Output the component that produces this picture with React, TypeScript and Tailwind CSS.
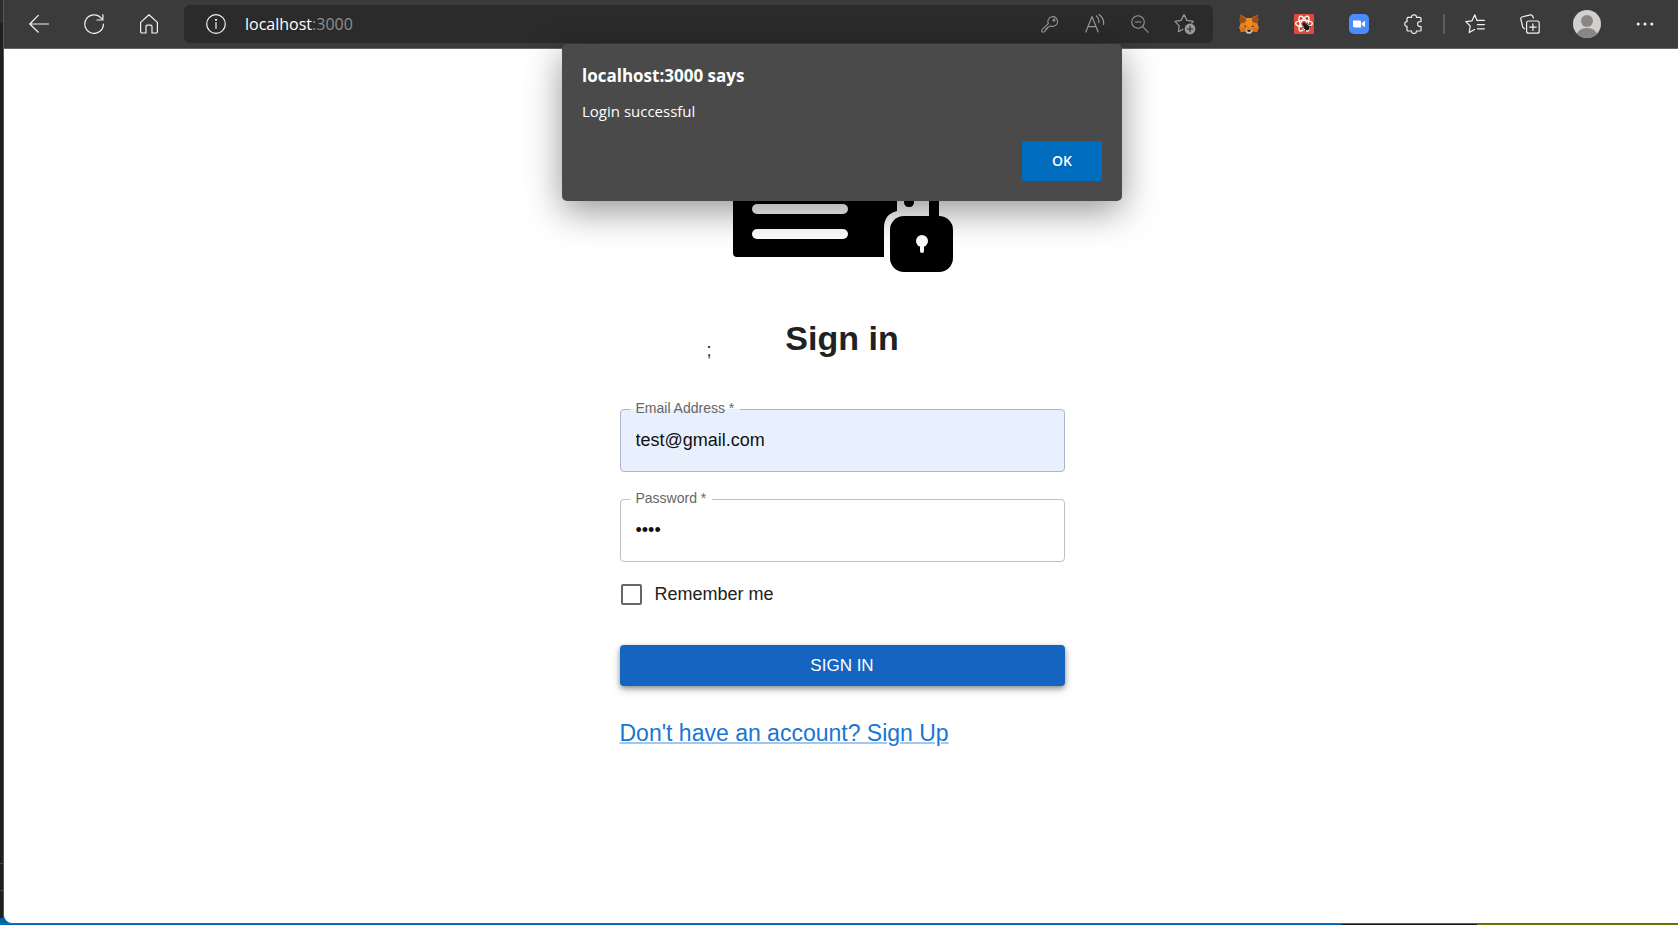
import { useState } from 'react';
import type { ReactNode } from 'react';

function IconButton({ label, width = 'w-[55px]', children }: { label: string; width?: string; children: ReactNode }) {
  return (
    <button type="button" aria-label={label} className={`${width} h-9 shrink-0 flex items-center justify-center`}>
      {children}
    </button>
  );
}

function Line({ size = 20, children }: { size?: number; children: ReactNode }) {
  return (
    <svg width={size} height={size} viewBox="0 0 20 20" fill="none" stroke="currentColor" strokeWidth="1.2" strokeLinecap="round" strokeLinejoin="round">
      {children}
    </svg>
  );
}

function MetaMaskIcon() {
  return (
    <svg width="20" height="20" viewBox="0 0 20 20">
      <path d="M1.4 0.6 L7.4 4 H12.6 L18.6 0.6 L19.4 6 L18.4 9.4 L19.8 13.6 L18 18 L13.6 17.2 L11.8 19.4 H8.2 L6.4 17.2 L2 18 L0.2 13.6 L1.6 9.4 L0.6 6 Z" fill="#e8821e" />
      <path d="M1.4 0.6 L7.4 5 L6.4 8.2 L1.6 9.4 L0.6 6 Z M18.6 0.6 L12.6 5 L13.6 8.2 L18.4 9.4 L19.4 6 Z" fill="#96501f" />
      <path d="M7.4 4.4 H12.6 L13.4 8.4 L12 13 H8 L6.6 8.4 Z" fill="#f6891f" />
      <path d="M5.2 11.2 L8 12.4 L5.8 13 Z M14.8 11.2 L12 12.4 L14.2 13 Z" fill="#2b3338" />
      <path d="M6.4 17.2 L8.2 15.4 H11.8 L13.6 17.2 L11.8 19.4 H8.2 Z" fill="#d4c6bb" />
      <path d="M8.2 15.8 H11.8 L11.3 17.8 H8.7 Z" fill="#161616" />
      <path d="M0.2 13.6 L5.8 13.2 L6.4 17.2 L2 18 Z M19.8 13.6 L14.2 13.2 L13.6 17.2 L18 18 Z" fill="#d9721a" />
    </svg>
  );
}

function ReactDevIcon() {
  return (
    <svg width="20" height="20" viewBox="0 0 20 20">
      <rect width="20" height="20" rx="1" fill="#dd4b39" />
      <g fill="none" stroke="#fff" strokeWidth="1.3">
        <ellipse cx="10" cy="9.6" rx="8.4" ry="3.3" />
        <ellipse cx="10" cy="9.6" rx="8.4" ry="3.3" transform="rotate(60 10 9.6)" />
        <ellipse cx="10" cy="9.6" rx="8.4" ry="3.3" transform="rotate(120 10 9.6)" />
      </g>
      <g transform="rotate(-40 12 12.5)">
        <ellipse cx="12" cy="13.4" rx="2.3" ry="3.4" fill="#1b1b1b" />
        <circle cx="12" cy="9.4" r="1.6" fill="#1b1b1b" />
        <path d="M8.4 10.4 L15.6 15.6 M15.6 10.4 L8.4 15.6 M8 13 H16" stroke="#1b1b1b" strokeWidth="0.9" />
      </g>
    </svg>
  );
}

function ZoomIcon() {
  return (
    <svg width="20" height="20" viewBox="0 0 20 20">
      <rect width="20" height="20" rx="5" fill="#4a8cff" />
      <path d="M4 6.6 H10.6 Q12.2 6.6 12.2 8.2 V13.4 H5.6 Q4 13.4 4 11.8 Z M13 9 L16 6.8 V13.2 L13 11 Z" fill="#fff" />
    </svg>
  );
}

function Toolbar() {
  return (
    <header className="flex h-[49px] items-center border-b border-[#6a6666] bg-[#3b3b3b] pl-[7px] pr-[6px] pb-1 pt-[3px] text-[#f2f2f2]">
      <IconButton label="Back">
        <Line><path d="M19.5 10 H0.8 M9.3 1.3 L0.8 10 L9.3 18.2" /></Line>
      </IconButton>
      <IconButton label="Refresh">
        <Line><path d="M17.6 4.6 A9.3 9.3 0 1 0 19.4 10 M18.9 0.6 V6 H13" /></Line>
      </IconButton>
      <IconButton label="Home">
        <Line><path d="M1.6 8.4 L10 0.8 L18.4 8.4 V17.4 Q18.4 19 16.8 19 H13 V12.4 Q13 11.2 11.8 11.2 H8.2 Q7 11.2 7 12.4 V19 H3.2 Q1.6 19 1.6 17.4 Z" /></Line>
      </IconButton>

      <div className="mx-2 flex h-[38px] min-w-0 flex-1 items-center rounded-md bg-[#2b2b2b] pl-1 pr-[6px]">
        <IconButton label="View site information">
          <Line>
            <circle cx="10" cy="10" r="9.3" />
            <path d="M10 8.6 V14.4" />
            <circle cx="10" cy="5.8" r="0.5" fill="currentColor" />
          </Line>
        </IconButton>
        <p className="min-w-0 flex-1 truncate pl-[2px] font-['Open_Sans',sans-serif] text-[16px] leading-6 text-[#8f8f8f]">
          <span className="text-white">localhost</span>:3000
        </p>
        <div className="flex text-[#9a9a9a]">
          <IconButton label="Saved passwords" width="w-[45px]">
            <Line size={18}>
              <path d="M8.2 9.6 A5.4 5.4 0 1 1 11.6 12.4 L10.2 12 L8.6 13.6 H7 V15.4 H5.2 V17.2 L3.6 18.8 H1 V16.2 Z" />
              <circle cx="14.4" cy="5.8" r="1" />
            </Line>
          </IconButton>
          <IconButton label="Read aloud" width="w-[45px]">
            <Line>
              <path d="M0.8 18 L7 2.6 L13.2 18 M3 12.6 H11 M11.4 2 Q14.4 4.6 13.8 8.6 M14 0.6 Q19.2 4.6 18.6 10.4" />
            </Line>
          </IconButton>
          <IconButton label="Zoom" width="w-[45px]">
            <Line size={18}><circle cx="7.8" cy="7.8" r="7" /><path d="M13 13 L19.2 19.2 M4.6 7.8 H11" /></Line>
          </IconButton>
          <IconButton label="Add to favorites" width="w-[45px]">
            <svg width="22" height="22" viewBox="0 0 22 22" fill="none" stroke="currentColor" strokeWidth="1.2" strokeLinejoin="round">
              <path d="M9.4 16 L4.4 18.8 L5.2 12.8 L1 8.4 L7 7.4 L10 1.6 L13 7.4 L19.4 8.4 L17.4 10.4" />
              <circle cx="16" cy="16" r="5.4" fill="currentColor" stroke="none" />
              <path d="M16 12.8 V19.2 M12.8 16 H19.2" stroke="#2b2b2b" />
            </svg>
          </IconButton>
        </div>
      </div>

      <IconButton label="MetaMask"><MetaMaskIcon /></IconButton>
      <IconButton label="React Developer Tools"><ReactDevIcon /></IconButton>
      <IconButton label="Zoom meetings"><ZoomIcon /></IconButton>
      <IconButton label="Extensions">
        <Line>
          <path d="M4 3.4 H7.6 Q7.4 0.8 10 0.8 Q12.6 0.8 12.4 3.4 H16 Q17 3.4 17 4.4 V7.6 Q13.6 7 13.6 10 Q13.6 13 17 12.4 V16 Q17 17 16 17 H12.4 Q12.6 19.4 10 19.4 Q7.4 19.4 7.6 17 H4 Q3 17 3 16 V12.4 Q0.8 12.6 0.8 10 Q0.8 7.4 3 7.6 V4.4 Q3 3.4 4 3.4 Z" />
        </Line>
      </IconButton>
      <div className="mx-[2px] h-5 w-[2px] shrink-0 bg-[#5c5c5c]" />
      <IconButton label="Favorites">
        <Line>
          <path d="M12 6.6 L9.8 0.8 L7 6.8 L0.8 7.6 L5.2 12 L4.2 18.6 L9.6 15.6 M12.4 6.4 H19.4 M12.4 10.6 H19.4 M12.4 14.8 H19.4" />
        </Line>
      </IconButton>
      <IconButton label="Collections">
        <Line>
          <rect x="6.6" y="7" width="12.6" height="12.2" rx="2" />
          <path d="M12.9 9.8 V16.4 M9.6 13.1 H16.2 M4.6 14.8 L2.8 13.4 L0.8 5 Q0.5 3.4 2 3 L10.6 0.8 Q12 0.6 12.6 2 L13.4 4" />
        </Line>
      </IconButton>
      <IconButton label="Profile" width="w-[60px]">
        <svg width="28" height="28" viewBox="0 0 28 28">
          <clipPath id="avatar"><circle cx="14" cy="14" r="14" /></clipPath>
          <g clipPath="url(#avatar)">
            <rect width="28" height="28" fill="#d2d0ce" />
            <circle cx="14" cy="11" r="6" fill="#8a8683" />
            <ellipse cx="14" cy="26" rx="10.5" ry="8" fill="#8a8683" />
          </g>
        </svg>
      </IconButton>
      <IconButton label="Settings and more">
        <svg width="18" height="4" viewBox="0 0 18 4" fill="currentColor">
          <circle cx="2.2" cy="2" r="1.5" /><circle cx="9" cy="2" r="1.5" /><circle cx="15.8" cy="2" r="1.5" />
        </svg>
      </IconButton>
    </header>
  );
}

function AlertDialog({ onClose }: { onClose: () => void }) {
  return (
    <div className="absolute inset-x-0 top-[44px] z-10 flex justify-center pl-[2px]">
      <div
        role="alertdialog"
        aria-labelledby="alert-title"
        aria-describedby="alert-text"
        className="w-[560px] rounded-[5px] bg-[#4a4a4a] px-5 py-5 font-['Open_Sans',sans-serif] text-white shadow-[0_10px_36px_rgba(0,0,0,0.42)]"
      >
        <h2 id="alert-title" className="text-[17px] font-bold leading-6">localhost:3000 says</h2>
        <p id="alert-text" className="mt-[11px] text-[15px] leading-6">Login successful</p>
        <div className="mt-[18px] flex justify-end">
          <button type="button" onClick={onClose} className="h-10 w-20 rounded-[2px] bg-[#006cbe] pb-[2px] text-[14px] font-semibold">
            OK
          </button>
        </div>
      </div>
    </div>
  );
}

function CardLockLogo() {
  return (
    <svg width="222" height="172" viewBox="-2 0 222 172" className="mx-auto">
      <path d="M4 16 H196 V90 H164 V111 Q151 114 151 128 V157 H4 Q0 157 0 153 V20 Q0 16 4 16 Z" />
      <rect x="164" y="50" width="42" height="61" fill="#fff" />
      <path d="M171 80 Q171 60 188.500 60 Q206 60 206 80 V120 H196 V80 Q196 70 188.500 70 Q181 70 181 80 V102 Q181 107 176 107 Q171 107 171 102 Z" />
      <rect x="19" y="104" width="96" height="10" rx="5" fill="#fff" />
      <rect x="19" y="129" width="96" height="10" rx="5" fill="#fff" />
      <rect x="157" y="116" width="63" height="56" rx="14" />
      <circle cx="189" cy="141" r="6" fill="#fff" />
      <rect x="187" y="143" width="4" height="10" rx="2" fill="#fff" />
    </svg>
  );
}

type FieldProps = { id: string; label: string; type: string; value: string; filled?: boolean; onChange: (value: string) => void };

function OutlinedField({ id, label, type, value, filled, onChange }: FieldProps) {
  return (
    <fieldset className={`min-w-0 rounded-[4px] border pl-[9px] pr-[15px] pb-2 ${filled ? 'border-[#adb6c8] bg-[#e8f0fe]' : 'border-[#c0c0c0] bg-white'}`}>
      <legend className="px-[6px] pb-[2px] text-[14px] leading-4 text-[#666666]">
        <label htmlFor={id}>{label} *</label>
      </legend>
      <input
        id={id}
        type={type}
        value={value}
        onChange={e => onChange(e.target.value)}
        className="block h-[45px] w-full bg-transparent px-[6px] text-[18px] text-[#111111] outline-none"
      />
    </fieldset>
  );
}

function SignInForm() {
  const [email, setEmail] = useState('test@gmail.com');
  const [password, setPassword] = useState('1234');
  const [remember, setRemember] = useState(false);

  return (
    <form onSubmit={e => e.preventDefault()} className="mt-[42px] flex flex-col">
      <div className="flex flex-col gap-[18px]">
        <OutlinedField id="email" label="Email Address" type="email" value={email} filled onChange={setEmail} />
        <OutlinedField id="password" label="Password" type="password" value={password} onChange={setPassword} />
      </div>
      <label className="mt-5 flex h-6 items-center gap-[13px] pl-[1px] text-[18px] text-[#212121]">
        <input
          type="checkbox"
          checked={remember}
          onChange={e => setRemember(e.target.checked)}
          className="size-[21px] appearance-none rounded-[2px] border-2 border-[#666666] checked:bg-[#1976d2]"
        />
        Remember me
      </label>
      <button
        type="submit"
        className="mt-[39px] h-[41px] rounded-[4px] bg-[#1565c0] text-[17px] text-white shadow-[0_2px_5px_rgba(0,0,0,0.35),0_4px_10px_rgba(0,0,0,0.18)]"
      >
        SIGN IN
      </button>
      <a href="#signup" className="mt-[29px] self-start text-[23px] leading-9 text-[#1976d2] underline decoration-[#1976d2]/40 decoration-2">
        Don't have an account? Sign Up
      </a>
    </form>
  );
}

export default function App() {
  const [alertOpen, setAlertOpen] = useState(true);

  return (
    <div className="relative flex min-h-screen flex-col bg-[#0063a8] font-['Liberation_Sans',Arial,sans-serif]">
      <div className="flex flex-1">
        <div className="mb-[5px] flex w-1 shrink-0 flex-col border-r border-[#555555] bg-[#1f1f1f]">
          <div className="h-[23px] bg-[#2d2d2d]" />
          <div className="mb-[27px] mt-auto h-[28px] border-y border-[#454545]" />
        </div>
        <div className="relative flex min-w-0 flex-1 flex-col">
          <Toolbar />
          {alertOpen && <AlertDialog onClose={() => setAlertOpen(false)} />}
          <main className="flex-1 rounded-bl-lg bg-white pb-12 pl-[26px] pr-6 pt-[51px]">
            <div className="mx-auto w-full max-w-[445px]">
              <CardLockLogo />
              <div className="mt-[46px] grid grid-cols-[1fr_auto_1fr] items-end">
                <span className="pl-[87px] text-[18px] leading-4 text-[#212121]">;</span>
                <h1 className="text-[34px] font-bold leading-10 text-[#212121]">Sign in</h1>
              </div>
              <SignInForm />
            </div>
          </main>
        </div>
      </div>
      <div className="flex h-[2px] border-t border-[#3f6585]">
        <div className="w-[80%]" />
        <div className="w-[8%] bg-[#14181c]" />
        <div className="flex-1 bg-[#6f7a0c]" />
      </div>
    </div>
  );
}
